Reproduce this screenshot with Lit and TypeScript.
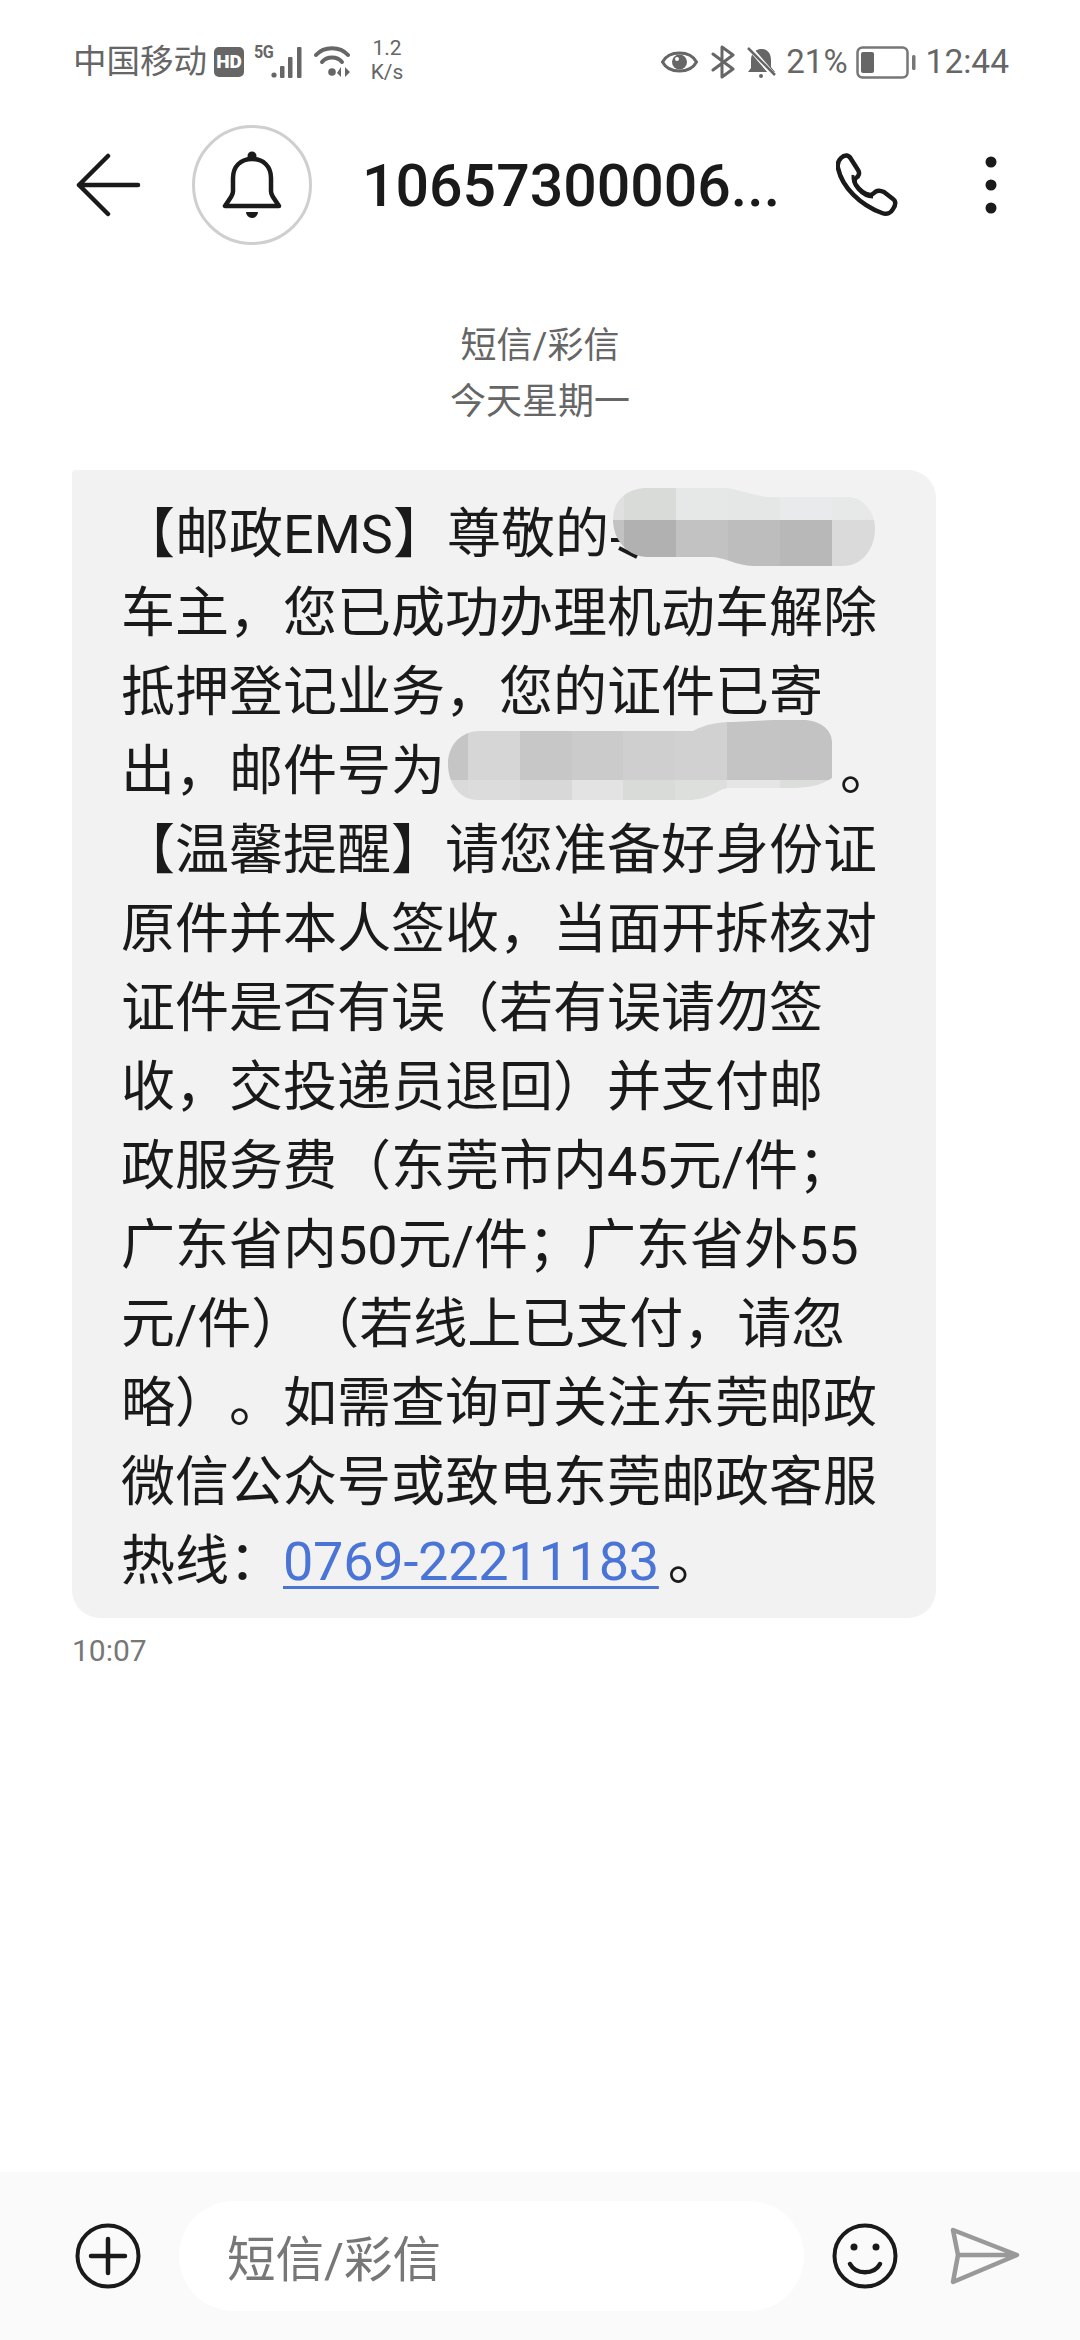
import { LitElement, html, css, svg } from "lit";
import { customElement } from "lit/decorators.js";

const LINES_A = ["车主，您已成功办理机动车解除", "抵押登记业务，您的证件已寄"];
const LINES_B = [
  "【温馨提醒】请您准备好身份证",
  "原件并本人签收，当面开拆核对",
  "证件是否有误（若有误请勿签",
  "收，交投递员退回）并支付邮",
  "政服务费（东莞市内45元/件；",
  "广东省内50元/件；广东省外55",
  "元/件）（若线上已支付，请忽",
  "略）。如需查询可关注东莞邮政",
  "微信公众号或致电东莞邮政客服",
];

type Band = { y: number; h: number; xs: number[]; colors: string[] };

const blob1: Band[] = [
  { y: 0, h: 32, xs: [0, 11, 63, 115, 167, 219, 262], colors: ["#dfe0df", "#d9dbd9", "#e6e7e7", "#e5e6e6", "#e9eaeb", "#e7e9e9"] },
  { y: 32, h: 46, xs: [0, 11, 63, 115, 167, 219, 262], colors: ["#c2c2c2", "#b1b1b1", "#c2c2c2", "#bdbdbd", "#b8b8b8", "#d9dad9"] },
];
const blob2: Band[] = [
  { y: 0, h: 60, xs: [0, 20, 72, 124, 175, 227, 279, 332, 384], colors: ["#c5c5c5", "#d6d6d6", "#c7c7c7", "#cbcbcb", "#cfcfcf", "#d1d1d1", "#c4c4c4", "#c3c3c3"] },
  { y: 60, h: 20, xs: [0, 20, 72, 124, 175, 227, 279, 332, 384], colors: ["#dadada", "#dcdcdc", "#d8d8d8", "#e3e3e3", "#d9dbd9", "#dddfdd", "#e5e5e5", "#dcdedc"] },
];

const cells = (bands: Band[]) =>
  bands.map((b) =>
    b.colors.map(
      (c, i) => svg`<rect x=${b.xs[i]} y=${b.y} width=${b.xs[i + 1] - b.xs[i]} height=${b.h} fill=${c}></rect>`
    )
  );

@customElement("app-root")
export class AppRoot extends LitElement {
  static styles = css`
    :host {
      display: block;
      width: 1080px;
      height: 2340px;
      background: #fff;
      font-family: Roboto, "Noto Sans CJK SC", sans-serif;
      color: #1a1a1a;
      overflow: hidden;
      text-spacing-trim: space-all;
      font-feature-settings: "chws" 0, "halt" 0, "palt" 0;
    }
    .page { display: flex; flex-direction: column; height: 100%; }
    svg { display: block; flex: none; }

    .status {
      height: 120px;
      display: flex;
      align-items: center;
      justify-content: space-between;
      padding: 4px 71px 0 73px;
      color: #666;
      box-sizing: border-box;
    }
    .st-left, .st-right { display: flex; align-items: center; }
    .carrier { font-size: 33.5px; line-height: 40px; }
    .hd {
      margin-left: 7px;
      width: 30px;
      height: 30px;
      border-radius: 5px;
      background: #666;
      color: #fff;
      font-size: 19px;
      font-weight: 900;
      line-height: 30px;
      text-align: center;
    }
    .sig { margin-left: 11px; position: relative; width: 50px; height: 32px; }
    .fiveg {
      position: absolute;
      left: -1px;
      top: -4px;
      font-size: 19px;
      line-height: 20px;
      font-weight: 700;
      letter-spacing: -0.5px;
      transform: scaleX(0.85);
      transform-origin: left;
    }
    .wifi { margin-left: 9px; }
    .speed {
      margin-left: 17px;
      width: 36px;
      font-size: 21px;
      line-height: 24px;
      text-align: center;
      margin-top: -5px;
    }
    .eye { margin-right: 1px; }
    .bt { margin-left: 12px; }
    .mute { margin-left: 11px; }
    .pct { margin-left: 10px; font-size: 33px; line-height: 40px; }
    .batt { margin-left: 8px; }
    .clock { margin-left: 10px; font-size: 33.5px; line-height: 40px; }

    .head {
      height: 130px;
      display: flex;
      align-items: center;
      padding-left: 76px;
      box-sizing: border-box;
    }
    .avatar {
      margin-left: 50px;
      width: 120px;
      height: 120px;
      box-sizing: border-box;
      border: 3px solid #cfcfcf;
      border-radius: 50%;
      display: flex;
      align-items: center;
      justify-content: center;
    }
    .title {
      margin-left: 50px;
      width: 444px;
      font-size: 59px;
      line-height: 72px;
      padding-top: 2px;
      font-weight: 500;
      white-space: nowrap;
    }
    .phone { margin-left: 30px; }
    .dots { margin-left: 87px; }

    .main { flex: 1; min-height: 0; }
    .section {
      margin-top: 68px;
      text-align: center;
      color: #666;
      font-size: 36px;
      line-height: 56px;
    }
    .bubble {
      position: relative;
      margin: 40px 0 0 72px;
      width: 864px;
      box-sizing: border-box;
      padding: 25px 0 17px 49px;
      background: #f2f2f2;
      border-radius: 4px 28px 28px 28px;
      font-size: 54px;
      line-height: 79px;
    }
    .line { white-space: nowrap; }
    .gap { display: inline-block; width: 386px; }
    .period { display: inline-block; margin-left: 9px; }
    a.tel {
      color: #4a74d6;
      letter-spacing: -0.25px;
      text-decoration: underline;
      text-decoration-thickness: 3px;
      text-underline-offset: 6px;
    }
    .mask { position: absolute; overflow: visible; }
    .m1 { left: 541px; top: 18px; }
    .m2 { left: 376px; top: 250px; }
    .time {
      margin: 13px 0 0 72px;
      font-size: 30px;
      line-height: 40px;
      color: #777;
    }

    .bar {
      height: 168px;
      background: #fafafa;
      display: flex;
      align-items: center;
      padding-left: 75px;
      box-sizing: border-box;
    }
    .input {
      margin-left: 38px;
      width: 625px;
      height: 110px;
      border-radius: 55px;
      background: #fff;
      display: flex;
      align-items: center;
      padding-left: 48px;
      box-sizing: border-box;
      font-size: 48.5px;
      color: #777;
    }
    .smile { margin-left: 28px; }
    .send { margin-left: 52px; }
  `;

  render() {
    return html`
      <div class="page">
        <div class="status">
          <div class="st-left">
            <span class="carrier">中国移动</span>
            <span class="hd">HD</span>
            <span class="sig">
              <span class="fiveg">5G</span>
              <svg width="50" height="32" viewBox="0 0 50 32" fill="#666">
                <circle cx="19" cy="29" r="2.6"></circle>
                <rect x="25" y="20" width="4.5" height="12" rx="1"></rect>
                <rect x="33" y="11" width="4.5" height="21" rx="1"></rect>
                <rect x="42" y="1" width="4.5" height="31" rx="1"></rect>
              </svg>
            </span>
            <svg class="wifi" width="38" height="34" viewBox="0 0 38 34" fill="none" stroke="#666" stroke-width="4" stroke-linecap="round">
              <path d="M2 10 C10 1 26 1 34 10"></path>
              <path d="M8 17 C13 11 23 11 28 17"></path>
              <circle cx="18" cy="27" r="3.8" fill="#666" stroke="none"></circle>
              <path d="M27 22 v10 l-4 -4 z M31 32 v-10 l5 5 z" fill="#666" stroke="none"></path>
            </svg>
            <span class="speed">1.2<br />K/s</span>
          </div>
          <div class="st-right">
            <svg class="eye" width="37" height="30" viewBox="0 0 37 30" fill="none" stroke="#666" stroke-width="3">
              <path d="M1.5 15 C8 3 29 3 35.5 15 C29 27 8 27 1.5 15z"></path>
              <circle cx="18.5" cy="15" r="7.5" fill="#666" stroke="none"></circle>
              <circle cx="16" cy="12" r="2" fill="#fff" stroke="none"></circle>
            </svg>
            <svg class="bt" width="25" height="34" viewBox="0 0 25 34" fill="none" stroke="#666" stroke-width="3" stroke-linejoin="round" stroke-linecap="round">
              <path d="M2 9 L22 24 L11 32 V2 L22 10 L2 25"></path>
            </svg>
            <svg class="mute" width="29" height="32" viewBox="0 0 29 32">
              <path d="M14 3 C21 3 24 8 24 14 V21 L28 26 H1 L4 22 V14 C4 8 8 3 14 3z" fill="#666"></path>
              <circle cx="14" cy="30" r="2" fill="#666"></circle>
              <path d="M2 1 L27 30" stroke="#fff" stroke-width="5"></path>
              <path d="M1 2 L28 29" stroke="#666" stroke-width="2.5"></path>
            </svg>
            <span class="pct">21%</span>
            <svg class="batt" width="60" height="33" viewBox="0 0 60 33" fill="none">
              <rect x="1.5" y="1.5" width="50" height="30" rx="5" stroke="#777" stroke-width="2.5"></rect>
              <rect x="5" y="6" width="13" height="21" rx="2" fill="#666"></rect>
              <rect x="56" y="9" width="3.5" height="15" rx="1.5" fill="#777"></rect>
            </svg>
            <span class="clock">12:44</span>
          </div>
        </div>

        <div class="head">
          <svg width="66" height="64" viewBox="0 0 66 64" fill="none" stroke="#1a1a1a" stroke-width="4.5" stroke-linecap="round" stroke-linejoin="round">
            <path d="M32 3 L3 32 L32 61 M3 32 H62"></path>
          </svg>
          <div class="avatar">
            <svg width="60" height="70" viewBox="0 0 60 70" fill="none" stroke="#1a1a1a" stroke-width="4.5" stroke-linejoin="round">
              <circle cx="30" cy="6" r="4.5" fill="#1a1a1a" stroke="none"></circle>
              <path d="M3 56 H57 L51 47 C50 45 49 44 49 41 V28 C49 16 41 9 30 9 C19 9 11 16 11 28 V41 C11 44 10 45 9 47 Z"></path>
              <path d="M24 62 H36 A6 6 0 0 1 24 62z" fill="#1a1a1a" stroke="none"></path>
            </svg>
          </div>
          <div class="title">10657300006...</div>
          <svg class="phone" width="62" height="64" viewBox="0 0 62 64" fill="none" stroke="#1a1a1a" stroke-width="4.5" stroke-linejoin="round">
            <path d="M5 5 C9 1 13 2 15 6 L22 17 C24 20 23 23 20 25 C18 27 18 29 20 32 C24 38 29 41 34 42 C37 42 38 39 41 38 C44 37 46 38 48 39 L57 46 C60 48 60 52 57 56 C55 60 51 62 46 60 C24 52 6 34 2 15 C1 11 2 8 5 5z"></path>
            <path d="M17 22 C16 32 26 44 37 44" stroke-width="3"></path>
          </svg>
          <svg class="dots" width="12" height="58" viewBox="0 0 12 58" fill="#1a1a1a">
            <circle cx="6" cy="6" r="5.5"></circle>
            <circle cx="6" cy="29" r="5.5"></circle>
            <circle cx="6" cy="52" r="5.5"></circle>
          </svg>
        </div>

        <div class="main">
          <div class="section">短信/彩信<br />今天星期一</div>
          <div class="bubble">
            <div class="line">【邮政EMS】尊敬的</div>
            ${LINES_A.map((l) => html`<div class="line">${l}</div>`)}
            <div class="line">出，邮件号为<span class="gap"></span><span class="period">。</span></div>
            ${LINES_B.map((l) => html`<div class="line">${l}</div>`)}
            <div class="line">热线：<a class="tel">0769-22211183</a><span class="period">。</span></div>

            <svg class="mask m1" width="262" height="78" viewBox="0 0 262 78">
              <defs>
                <clipPath id="c1">
                  <path d="M0 32 C0 12 14 0 35 0 H110 C125 0 140 9 160 9 H235 C250 9 262 24 262 40 C262 60 250 78 230 78 H140 C125 78 110 69 100 69 H35 C15 69 0 52 0 32Z"></path>
                </clipPath>
              </defs>
              <path d="M-2 52 H8 M6 60 L24 69" stroke="#1a1a1a" stroke-width="4" fill="none"></path>
              <g clip-path="url(#c1)">${cells(blob1)}</g>
            </svg>
            <svg class="mask m2" width="384" height="80" viewBox="0 0 384 80">
              <defs>
                <clipPath id="c2">
                  <path d="M0 44 C0 24 14 11 32 11 H245 C258 4 270 2 285 2 L325 0 H355 C372 0 384 10 384 22 V58 C372 66 360 68 340 68 H280 C268 70 262 80 240 80 H30 C12 80 0 64 0 44Z"></path>
                </clipPath>
              </defs>
              <g clip-path="url(#c2)">${cells(blob2)}</g>
            </svg>
          </div>
          <div class="time">10:07</div>
        </div>

        <div class="bar">
          <svg width="66" height="66" viewBox="0 0 66 66" fill="none" stroke="#1a1a1a">
            <circle cx="33" cy="33" r="30.5" stroke-width="4"></circle>
            <path d="M33 16 V50 M16 33 H50" stroke-width="4.5" stroke-linecap="round"></path>
          </svg>
          <div class="input">短信/彩信</div>
          <svg class="smile" width="66" height="66" viewBox="0 0 66 66" fill="none" stroke="#1a1a1a" stroke-width="4">
            <circle cx="33" cy="33" r="30.5"></circle>
            <circle cx="22" cy="24" r="3.5" fill="#1a1a1a" stroke="none"></circle>
            <circle cx="44" cy="24" r="3.5" fill="#1a1a1a" stroke="none"></circle>
            <path d="M18 41 C24 52 42 52 48 41" stroke-width="4.5" stroke-linecap="round"></path>
          </svg>
          <svg class="send" width="70" height="58" viewBox="0 0 70 58" fill="none" stroke="#999" stroke-width="4.5" stroke-linejoin="round">
            <path d="M3 3 L67 28 L3 55 L8 28 Z M8 28 H67"></path>
          </svg>
        </div>
      </div>
    `;
  }
}
